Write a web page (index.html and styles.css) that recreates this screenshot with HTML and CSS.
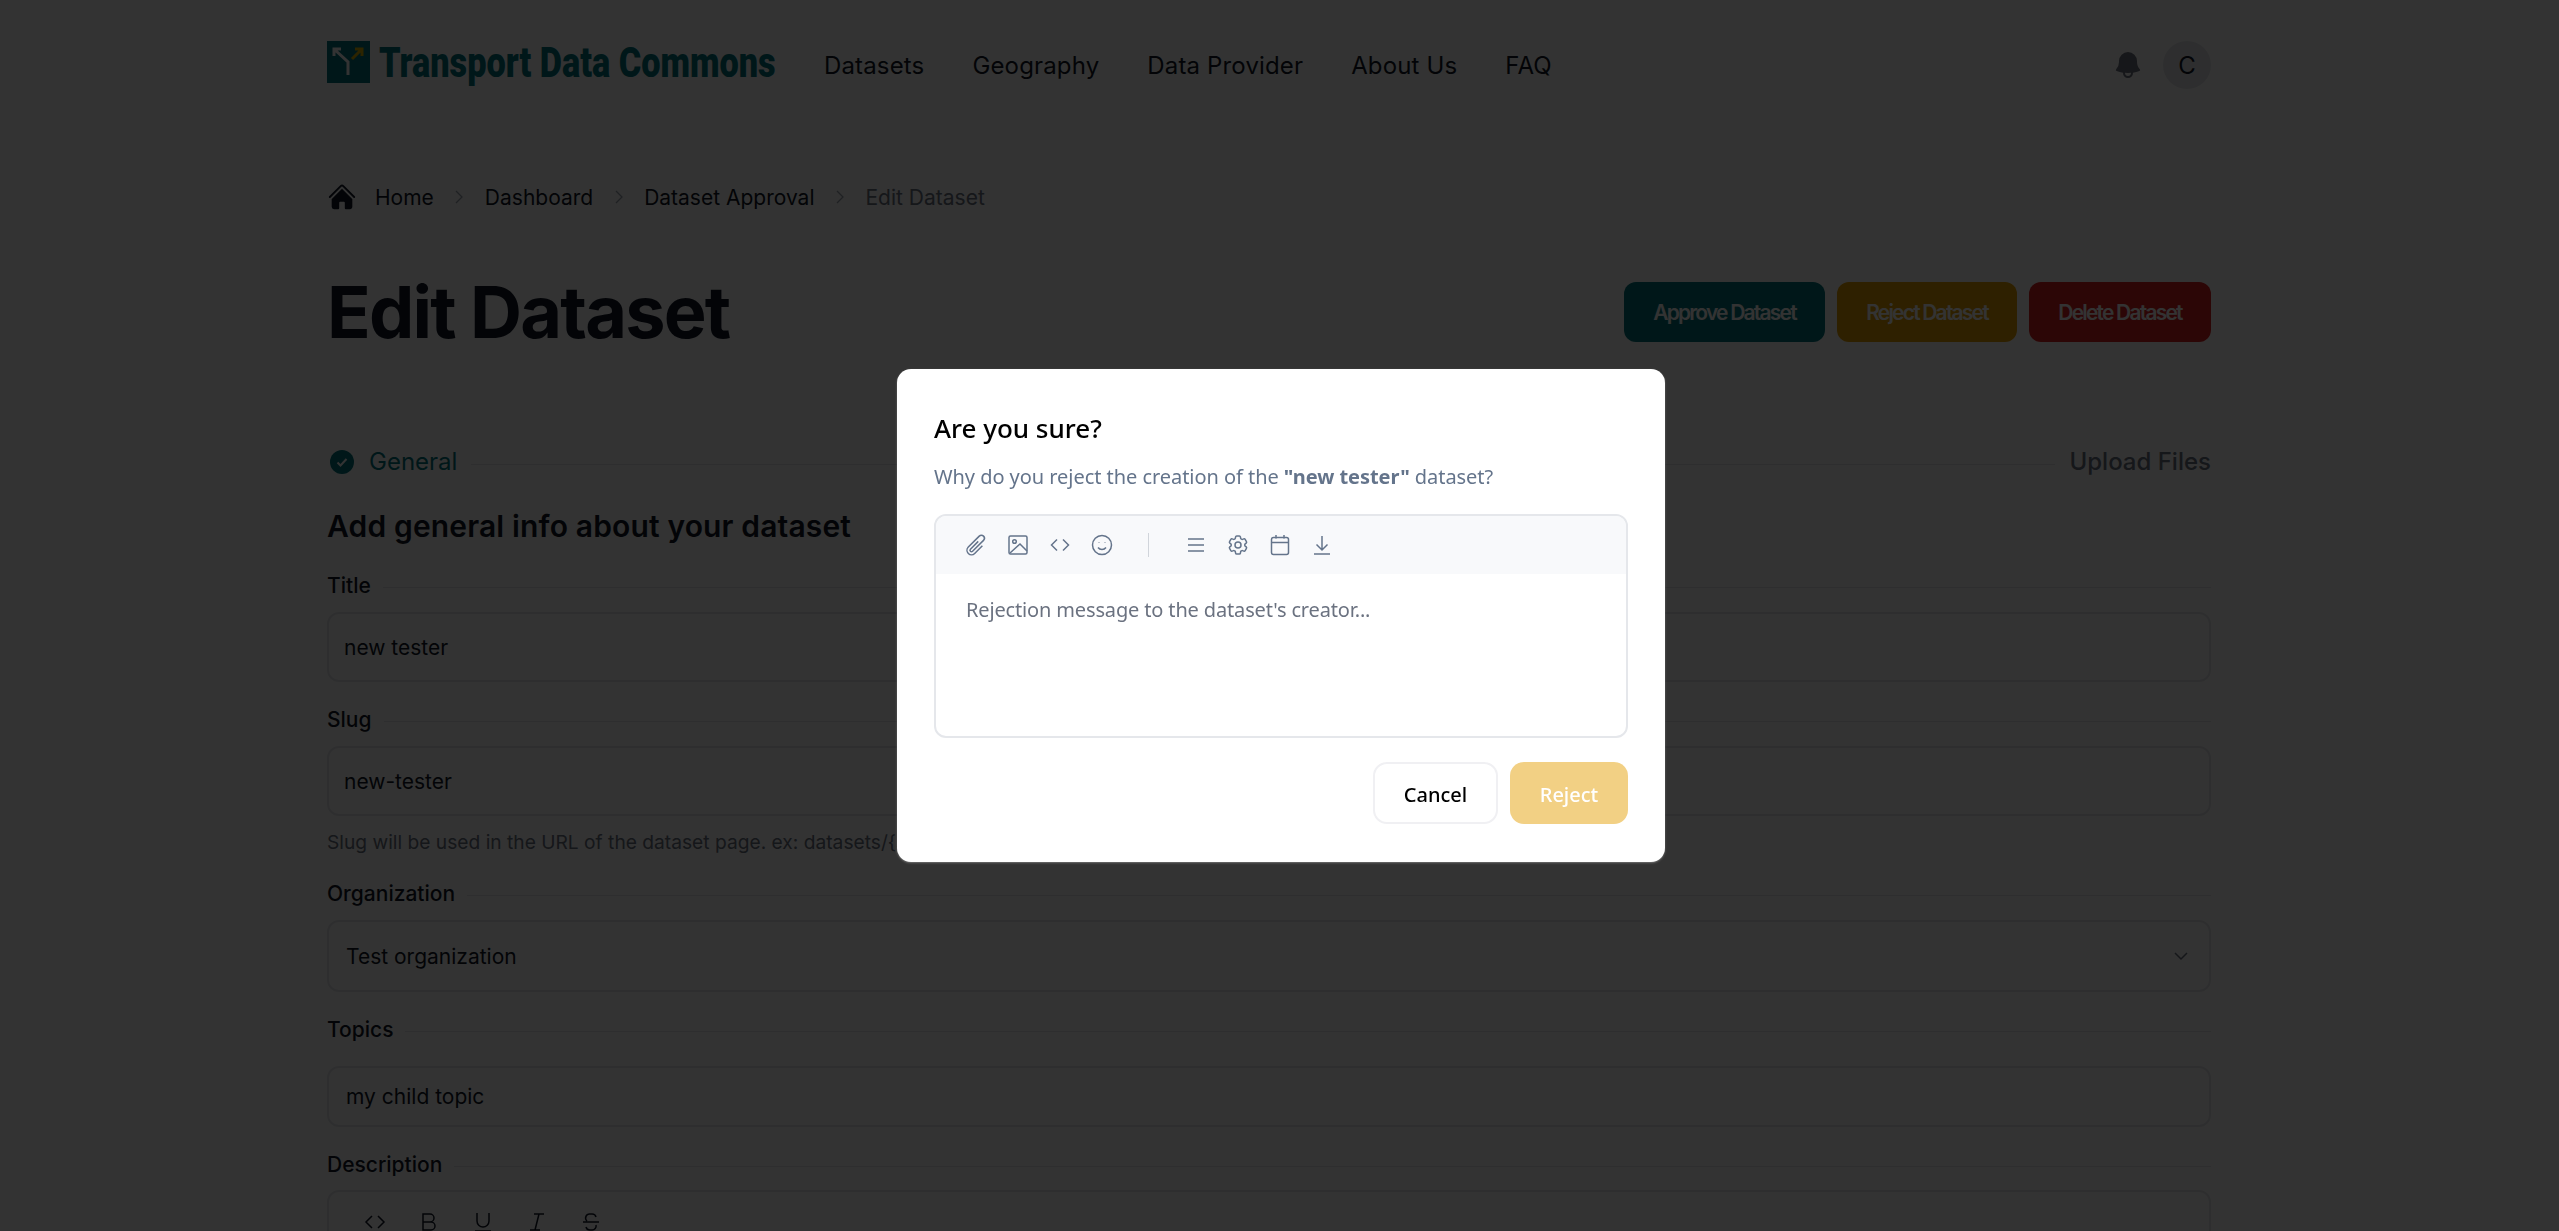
FILE: index.html
```html
<!DOCTYPE html>
<html>
<head>
<meta charset="utf-8">
<title>Edit Dataset - Transport Data Commons</title>
<link rel="stylesheet" href="styles.css">
</head>
<body>

<div class="page">
  <header class="topbar">
    <a class="logo">
      <svg class="logo-mark" viewBox="0 0 43 42">
        <rect width="43" height="42" fill="#00757c"/>
        <path d="M21 34V21L8 9M7 15V8h7" fill="none" stroke="#fff" stroke-width="3"/>
        <path d="M25 18 35 8M28 8h7v7" fill="none" stroke="#e0b400" stroke-width="3"/>
      </svg>
      <span class="logo-text"><span class="logo-squeeze">Transport Data Commons</span></span>
    </a>
    <nav class="nav">
      <a>Datasets</a>
      <a>Geography</a>
      <a>Data Provider</a>
      <a>About Us</a>
      <a>FAQ</a>
    </nav>
    <div class="user">
      <svg class="bell" viewBox="0 0 24 24" fill="#6f7480">
        <path fill-rule="evenodd" d="M5.25 9a6.75 6.75 0 0 1 13.5 0v.75c0 2.123.8 4.057 2.118 5.52a.75.75 0 0 1-.297 1.206c-1.544.57-3.16.99-4.831 1.243a3.75 3.75 0 1 1-7.48 0 24.585 24.585 0 0 1-4.831-1.244.75.75 0 0 1-.298-1.205A8.217 8.217 0 0 0 5.25 9.75V9Zm4.502 8.9a2.25 2.25 0 1 0 4.496 0 25.057 25.057 0 0 1-4.496 0Z"/>
      </svg>
      <div class="avatar">C</div>
    </div>
  </header>

  <div class="crumbs">
    <svg class="home" viewBox="0 0 24 24" fill="#111827">
      <path d="M11.47 3.84a.75.75 0 0 1 1.06 0l8.69 8.69a.75.75 0 1 0 1.06-1.06l-8.689-8.69a2.25 2.25 0 0 0-3.182 0l-8.69 8.69a.75.75 0 1 0 1.061 1.06l8.69-8.69Z"/>
      <path d="m12 5.432 8.159 8.159c.03.03.06.058.091.086v6.198c0 1.035-.84 1.875-1.875 1.875H15a.75.75 0 0 1-.75-.75v-4.5a.75.75 0 0 0-.75-.75h-3a.75.75 0 0 0-.75.75V21a.75.75 0 0 1-.75.75H5.625a1.875 1.875 0 0 1-1.875-1.875v-6.198a2.29 2.29 0 0 0 .091-.086L12 5.432Z"/>
    </svg>
    <a>Home</a>
    <svg class="sep" viewBox="0 0 8 14"><path d="M1 1l6 6-6 6"/></svg>
    <a>Dashboard</a>
    <svg class="sep" viewBox="0 0 8 14"><path d="M1 1l6 6-6 6"/></svg>
    <a>Dataset Approval</a>
    <svg class="sep" viewBox="0 0 8 14"><path d="M1 1l6 6-6 6"/></svg>
    <a class="current">Edit Dataset</a>
  </div>

  <div class="title-row">
    <h1>Edit Dataset</h1>
    <div class="actions">
      <button class="btn btn-approve">Approve Dataset</button>
      <button class="btn btn-reject">Reject Dataset</button>
      <button class="btn btn-delete">Delete Dataset</button>
    </div>
  </div>

  <div class="steps">
    <svg class="step-check" viewBox="0 0 24 24">
      <circle cx="12" cy="12" r="12" fill="#00757c"/>
      <path d="M7.5 12.5l3 3 6-6.5" fill="none" stroke="#fff" stroke-width="2"/>
    </svg>
    <span class="step-done">General</span>
    <div class="step-line"></div>
    <span class="step-next">Upload Files</span>
  </div>

  <h2>Add general info about your dataset</h2>

  <div class="field first">
    <div class="label"><span>Title</span><i></i></div>
    <div class="box">new tester</div>
  </div>

  <div class="field">
    <div class="label"><span>Slug</span><i></i></div>
    <div class="box">new-tester</div>
    <p class="help">Slug will be used in the URL of the dataset page. ex: datasets/{slug}</p>
  </div>

  <div class="field">
    <div class="label"><span>Organization</span><i></i></div>
    <div class="box box-tall box-select">
      Test organization
      <svg class="caret" viewBox="0 0 24 24"><path d="M6 9l6 6 6-6"/></svg>
    </div>
  </div>

  <div class="field">
    <div class="label label-wide"><span>Topics</span><i></i></div>
    <div class="box box-short">my child topic</div>
  </div>

  <div class="field">
    <div class="label label-tight"><span>Description</span><i></i></div>
    <div class="box box-editor">
      <svg viewBox="0 0 24 24"><path d="M9 6l-6 6 6 6M15 6l6 6-6 6"/></svg>
      <svg viewBox="0 0 24 24"><path d="M6 4h7a4 4 0 0 1 0 8H6zM6 12h8a4 4 0 0 1 0 8H6z"/></svg>
      <svg viewBox="0 0 24 24"><path d="M6 3v8a6 6 0 0 0 12 0V3M4 21h16"/></svg>
      <svg viewBox="0 0 24 24"><path d="M9 4h10M5 20h10M14 4l-4 16"/></svg>
      <svg viewBox="0 0 24 24"><path d="M17 7a4 4 0 0 0-4-3h-2a4 4 0 0 0-3 7M4 12h16M7 17a4 4 0 0 0 4 3h2a4 4 0 0 0 4-5"/></svg>
    </div>
  </div>
</div>

<div class="overlay">
  <div class="modal">
    <h3>Are you sure?</h3>
    <p class="modal-text">Why do you reject the creation of the <b>"new tester"</b> dataset?</p>
    <div class="editor">
      <div class="toolbar">
        <div class="tool-group">
          <svg viewBox="0 0 24 24"><path d="m18.375 12.739-7.693 7.693a4.5 4.5 0 0 1-6.364-6.364l10.94-10.94A3 3 0 1 1 19.5 7.372L8.552 18.32m.009-.01-.01.01m5.699-9.941-7.81 7.81a1.5 1.5 0 0 0 2.112 2.13"/></svg>
          <svg viewBox="0 0 24 24"><rect x="3" y="3" width="18" height="18" rx="1.5"/><circle cx="8.5" cy="8.5" r="1.8"/><path d="M4 20l10-9 7 7"/></svg>
          <svg viewBox="0 0 24 24"><path d="M9 6.500L3.500 12 9 17.500M15 6.500l5.500 5.500L15 17.500"/></svg>
          <svg viewBox="0 0 24 24"><circle cx="12" cy="12" r="9.500"/><path d="M8 14.500a5 5 0 0 0 8 0M9 9.500v.5M15 9.500v.5"/></svg>
        </div>
        <div class="tool-divider"></div>
        <div class="tool-group">
          <svg viewBox="0 0 24 24"><path d="M4 6h16M4 12h16M4 18h16"/></svg>
          <svg viewBox="0 0 24 24"><path d="M9.594 3.940c.09-.542.56-.94 1.110-.94h2.593c.55 0 1.020.398 1.110.94l.213 1.281c.063.374.313.686.645.870.074.040.147.083.220.127.325.196.720.257 1.075.124l1.217-.456a1.125 1.125 0 0 1 1.370.490l1.296 2.247a1.125 1.125 0 0 1-.260 1.431l-1.003.827c-.293.241-.438.613-.430.992a7.723 7.723 0 0 1 0 .255c-.008.378.137.750.430.991l1.004.827c.424.350.534.955.260 1.430l-1.298 2.247a1.125 1.125 0 0 1-1.369.491l-1.217-.456c-.355-.133-.750-.072-1.076.124a6.470 6.470 0 0 1-.220.128c-.331.183-.581.495-.644.869l-.213 1.281c-.090.543-.560.940-1.110.940h-2.594c-.550 0-1.019-.398-1.110-.940l-.213-1.281c-.062-.374-.312-.686-.644-.870a6.520 6.520 0 0 1-.220-.127c-.325-.196-.720-.257-1.076-.124l-1.217.456a1.125 1.125 0 0 1-1.369-.490l-1.297-2.247a1.125 1.125 0 0 1 .260-1.431l1.004-.827c.292-.240.437-.613.430-.991a6.932 6.932 0 0 1 0-.255c.007-.380-.138-.751-.430-.992l-1.004-.827a1.125 1.125 0 0 1-.260-1.430l1.297-2.247a1.125 1.125 0 0 1 1.370-.491l1.216.456c.356.133.751.072 1.076-.124.072-.044.146-.086.220-.128.332-.183.582-.495.644-.869l.214-1.280Z"/><circle cx="12" cy="12" r="3"/></svg>
          <svg viewBox="0 0 24 24"><rect x="3.500" y="4.500" width="17" height="17" rx="2"/><path d="M3.500 9.500h17M8 2v3.500M16 2v3.500"/></svg>
          <svg viewBox="0 0 24 24"><path d="M12 3v14M6.500 11.500L12 17l5.500-5.500M4 21h16"/></svg>
        </div>
      </div>
      <div class="editor-body">Rejection message to the dataset's creator...</div>
    </div>
    <div class="modal-buttons">
      <button class="modal-btn modal-cancel">Cancel</button>
      <button class="modal-btn modal-reject">Reject</button>
    </div>
  </div>
</div>

</body>
</html>
```

FILE: styles.css
```css
html, body {
    margin: 0;
    height: 100%;
    overflow: hidden;
    background: #fff;
}

body {
    font-family: Inter, "Liberation Sans", sans-serif;
    color: #111827;
}

.page {
    box-sizing: border-box;
    height: 100vh;
    overflow: hidden;
    padding: 41px 348px 0 327px;
}

/* top bar */
.topbar {
    display: flex;
    align-items: center;
    height: 48px;
}
.logo {
    display: flex;
    align-self: flex-start;
    width: 497px;
    flex: none;
}
.logo-mark {
    width: 43px;
    height: 42px;
    flex: none;
}
.logo-text {
    display: block;
    margin-left: 9px;
    height: 42px;
}
.logo-squeeze {
    display: inline-block;
    font-family: Roboto, sans-serif;
    font-weight: 900;
    font-size: 43px;
    line-height: 42px;
    color: #00757c;
    white-space: nowrap;
    transform: scaleX(0.797);
    transform-origin: left center;
}
.nav {
    display: flex;
    gap: 48px;
    font-size: 24px;
    letter-spacing: 0.15px;
}
.user {
    display: flex;
    align-items: center;
    gap: 19px;
    margin-left: auto;
}
.bell {
    width: 32px;
    height: 32px;
}
.avatar {
    width: 48px;
    height: 48px;
    border-radius: 50%;
    background: #e5e7eb;
    display: flex;
    align-items: center;
    justify-content: center;
    font-size: 24px;
}

/* breadcrumb */
.crumbs {
    display: flex;
    align-items: center;
    height: 30px;
    margin-top: 93px;
    font-size: 21px;
}
.home {
    width: 30px;
    height: 30px;
    margin-right: 18px;
}
.sep {
    width: 8px;
    height: 14px;
    margin: 0 21.5px;
    fill: none;
    stroke: #9ca3af;
    stroke-width: 1.3;
}
.current {
    color: #6b7280;
}

/* heading */
.title-row {
    display: flex;
    justify-content: space-between;
    align-items: center;
    height: 60px;
    margin-top: 70px;
}
h1 {
    margin: 0;
    font-size: 72px;
    font-weight: 700;
    letter-spacing: -1.8px;
    line-height: 60px;
}
.actions {
    display: flex;
    gap: 12px;
}
.btn {
    height: 60px;
    border: 0;
    border-radius: 12px;
    padding: 0;
    font-family: inherit;
    font-size: 21px;
    font-weight: 600;
    letter-spacing: -1.8px;
    white-space: nowrap;
    color: #fff;
}
.btn-approve { background: #00757c; width: 201px; }
.btn-reject { background: #e6a000; width: 180px; }
.btn-delete { background: #dc1e1e; width: 182px; }

/* steps */
.steps {
    display: flex;
    align-items: center;
    height: 24px;
    margin-top: 108px;
    font-size: 24px;
}
.step-check {
    width: 24px;
    height: 24px;
    margin-left: 3px;
    margin-right: 15px;
}
.step-done,
.step-next {
    margin-top: -2px;
}
.step-done {
    color: #00757c;
}
.step-line {
    flex: 1;
    height: 1px;
    background: #e5e7eb;
    margin: 4px 14px 0;
}
.step-next {
    color: #6b7280;
    font-weight: 500;
}

h2 {
    margin: 34px 0 0;
    font-size: 30px;
    font-weight: 600;
    letter-spacing: 0.15px;
    line-height: 36px;
}

/* form */
.field {
    margin-top: 23px;
}
.field.first {
    margin-top: 27px;
}
.label {
    display: flex;
    align-items: center;
    height: 28px;
    margin-bottom: 13px;
    font-size: 21px;
    font-weight: 500;
}
.label i {
    flex: 1;
    height: 1px;
    background: #e5e7eb;
    margin: 4px 0 0 12px;
}
.label-wide {
    margin-bottom: 23px;
}
.label-tight {
    margin-bottom: 12px;
}
.box {
    display: flex;
    align-items: center;
    box-sizing: border-box;
    height: 70px;
    padding: 0 15px;
    border: 2px solid #e5e7eb;
    border-radius: 12px;
    font-size: 21px;
}
.box-tall {
    height: 72px;
    padding: 0 17px;
}
.box-short {
    height: 61px;
    padding: 0 17px;
}
.box-select {
    justify-content: space-between;
}
.caret {
    width: 24px;
    height: 24px;
    margin-right: -1px;
    fill: none;
    stroke: #6b7280;
    stroke-width: 1.5;
}
.help {
    margin: 13px 0 0;
    font-size: 19.2px;
    line-height: 27px;
    color: #6b7280;
}
.box-editor {
    height: 200px;
    align-items: flex-start;
    gap: 30px;
    padding: 18px 34px;
}
.box-editor svg {
    width: 24px;
    height: 24px;
    flex: none;
    fill: none;
    stroke: #111827;
    stroke-width: 1.5;
}

/* dialog */
.overlay {
    position: fixed;
    top: 0;
    right: 0;
    bottom: 0;
    left: 0;
    background: rgba(0, 0, 0, 0.8);
    display: flex;
    align-items: center;
    justify-content: center;
    font-family: "Noto Sans", "Open Sans", sans-serif;
}
.modal {
    box-sizing: border-box;
    width: 768px;
    height: 493px;
    margin-left: 3px;
    padding: 39px 37px 0;
    background: #fff;
    border-radius: 14px;
    box-shadow: 0 1px 2px rgba(255, 255, 255, 0.3);
}
h3 {
    margin: 0;
    font-size: 26px;
    font-weight: 500;
    line-height: 40px;
    color: #000;
}
.modal-text {
    margin: 14px 0 0;
    font-size: 20px;
    letter-spacing: -0.05px;
    line-height: 30px;
    color: #64748b;
}
.editor {
    box-sizing: border-box;
    height: 224px;
    margin-top: 22px;
    border: 2px solid #e5e7eb;
    border-radius: 12px;
    overflow: hidden;
}
.toolbar {
    display: flex;
    align-items: center;
    height: 58px;
    padding-left: 28px;
    background: #f8f9fb;
}
.tool-group {
    display: flex;
    gap: 18px;
}
.tool-group svg {
    width: 24px;
    height: 24px;
    fill: none;
    stroke: #64748b;
    stroke-width: 1.5;
}
.tool-divider {
    width: 1px;
    height: 24px;
    margin: 0 35px 0 34px;
    background: #d1d5db;
}
.editor-body {
    padding: 21px 30px;
    font-size: 20px;
    letter-spacing: -0.15px;
    line-height: 30px;
    color: #6b7280;
}
.modal-buttons {
    display: flex;
    justify-content: flex-end;
    gap: 12px;
    margin-top: 24px;
}
.modal-btn {
    height: 62px;
    padding: 2px 0 0;
    border-radius: 14px;
    font-family: inherit;
    font-size: 20px;
    font-weight: 500;
}
.modal-cancel {
    width: 125px;
    background: #fff;
    border: 2px solid #f0f0f3;
    color: #000;
}
.modal-reject {
    width: 118px;
    background: #f2d084;
    border: 0;
    color: #fff;
}
```
